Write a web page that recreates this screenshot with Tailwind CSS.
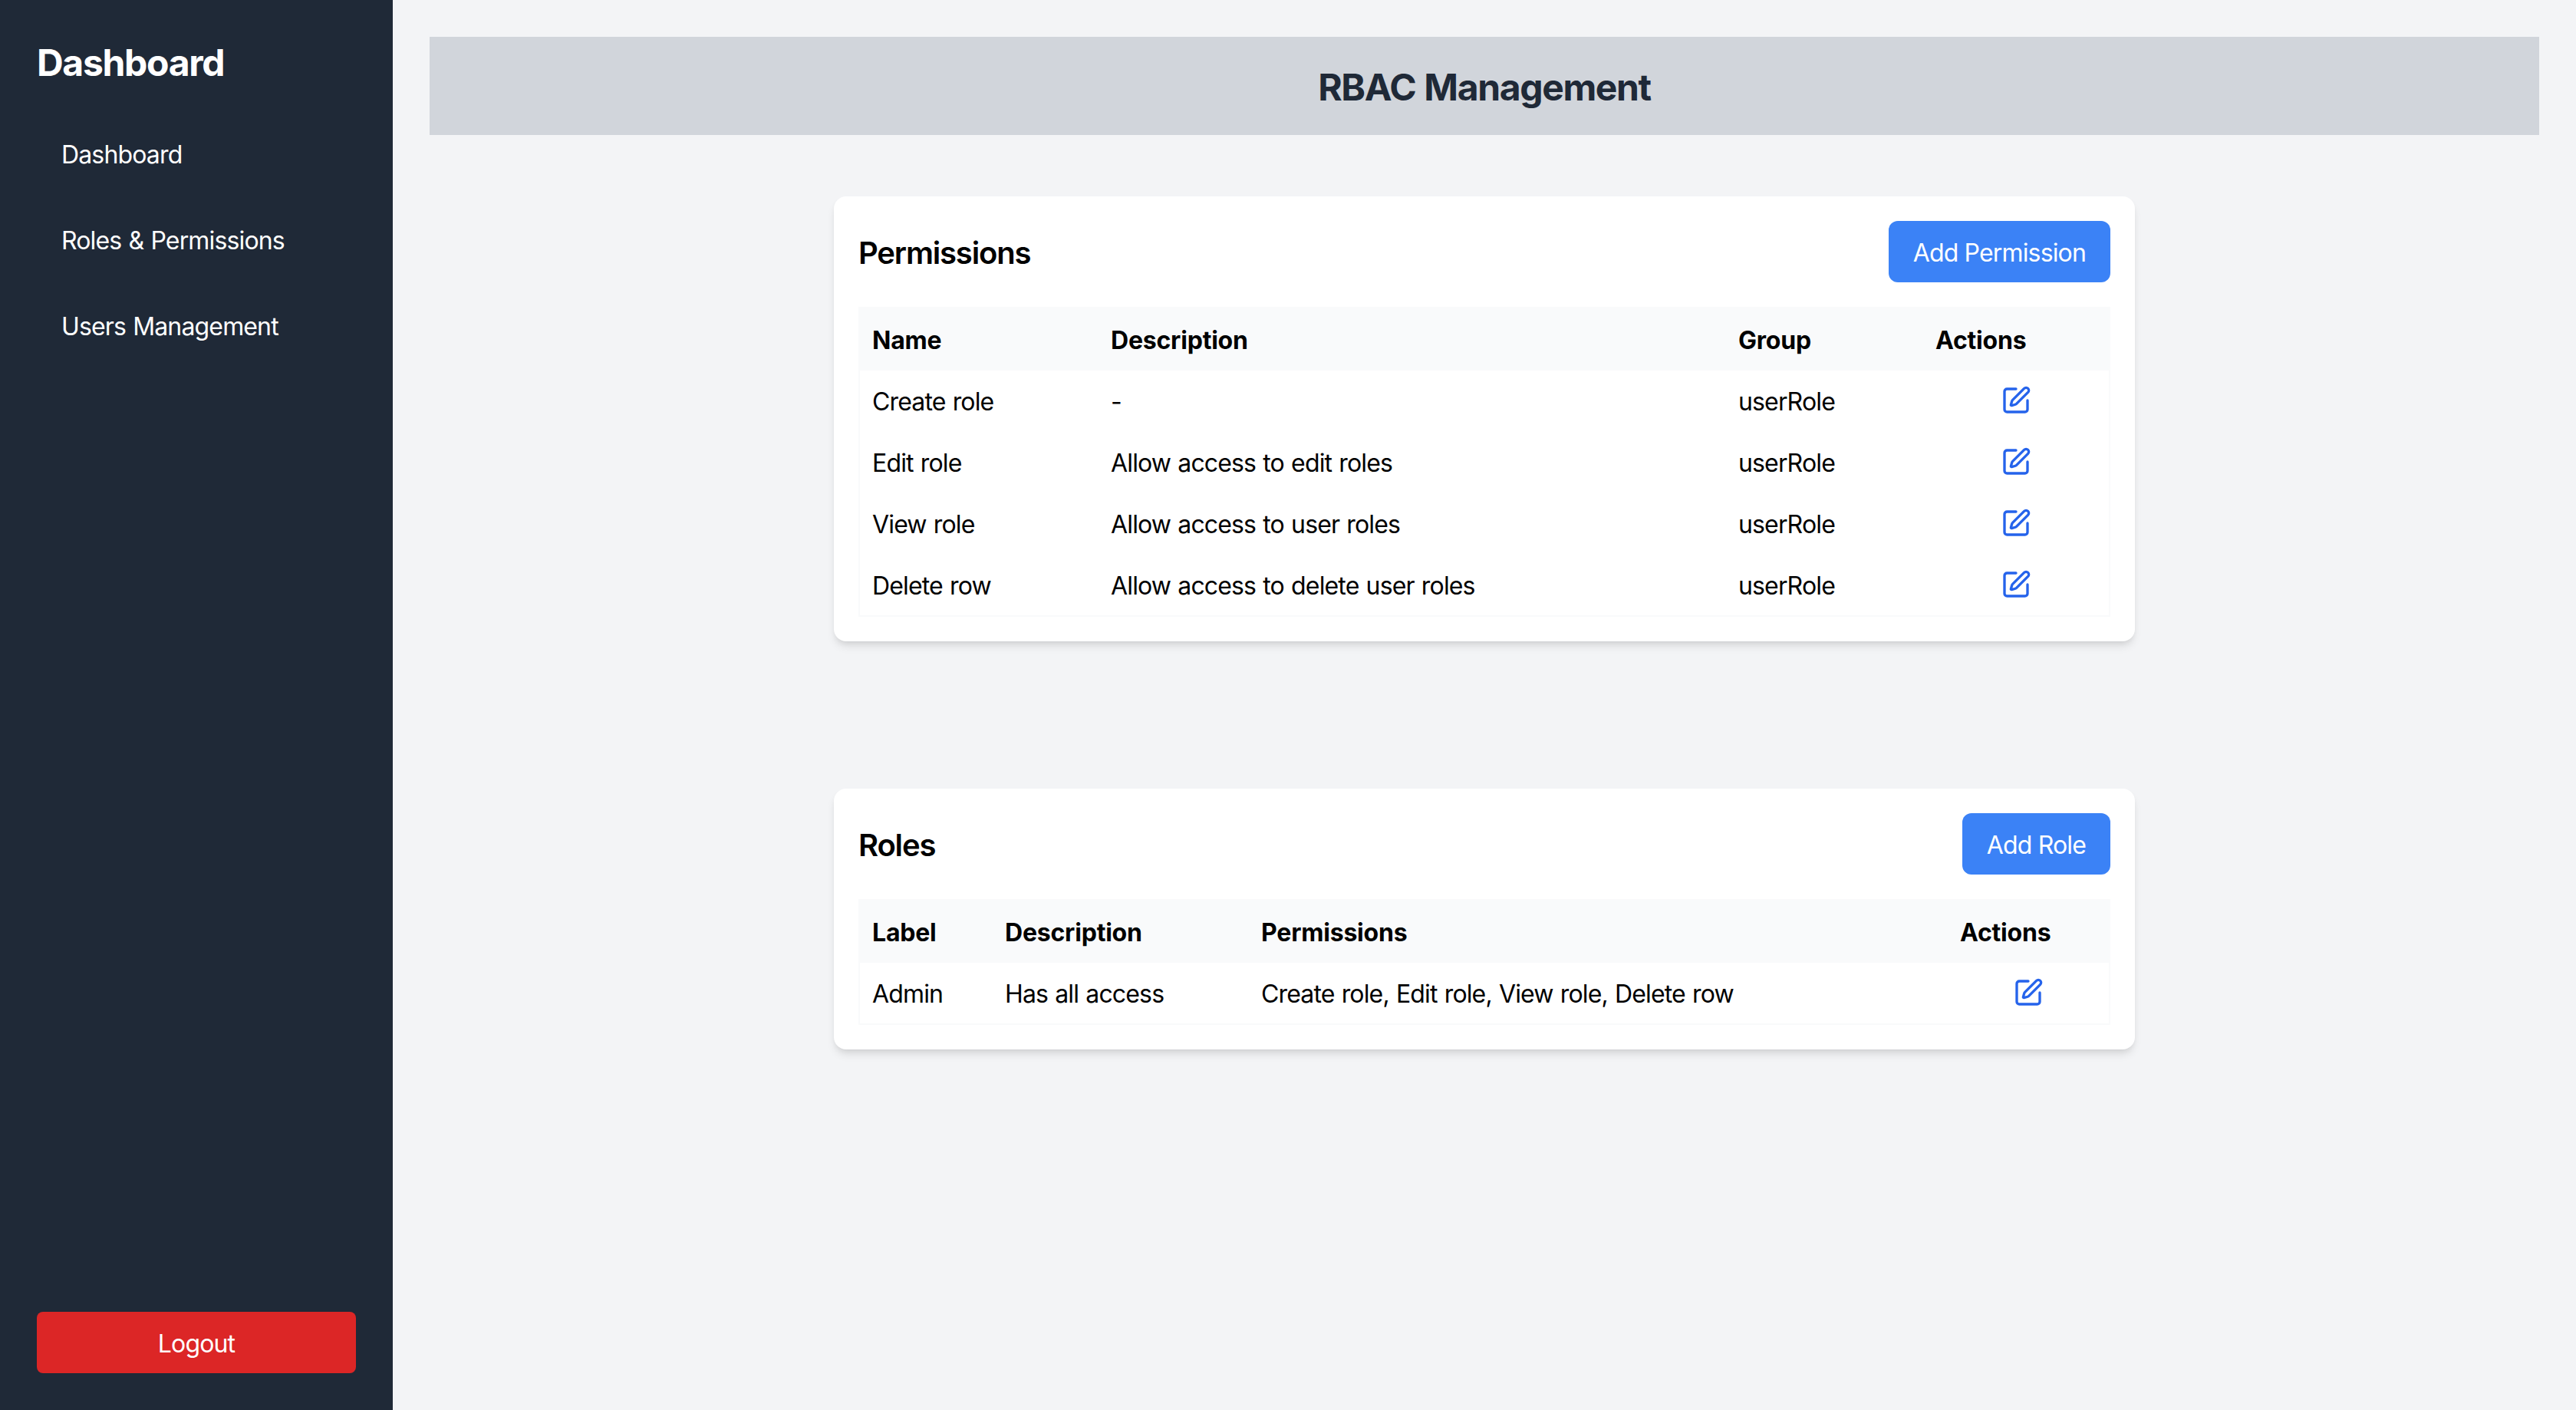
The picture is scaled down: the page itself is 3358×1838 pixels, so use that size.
<!DOCTYPE html>
<html lang="en">

<head>
    <meta charset="UTF-8">
    <meta name="viewport" content="width=device-width, initial-scale=1.0">
    <script src="https://cdn.jsdelivr.net/npm/@tailwindcss/browser@4"></script>
    <title>RBAC Management</title>
</head>

<body class="font-['Inter',sans-serif] text-[32px] leading-[48px] tracking-[-0.85px] [word-spacing:1px] text-black bg-[#f3f4f6]">
<div class="flex h-[1838px]">
    <!-- sidebar -->
    <aside class="w-[512px] shrink-0 bg-[#1f2937] text-white p-[48px] flex flex-col justify-between">
        <div>
            <h2 class="text-[48px] leading-[64px] font-bold tracking-[-1.3px] pt-[2px] mb-[46px]">Dashboard</h2>
            <ul class="flex flex-col gap-[32px]">
                <li class="px-[32px] pt-[18px] pb-[14px]">Dashboard</li>
                <li class="px-[32px] pt-[18px] pb-[14px]">Roles &amp; Permissions</li>
                <li class="px-[32px] pt-[18px] pb-[14px]">Users Management</li>
            </ul>
        </div>
        <button class="w-full h-[80px] pt-[4px] bg-[#dc2626] text-white rounded-[8px]">Logout</button>
    </aside>

    <main class="flex-1 p-[48px]">
        <h1 class="bg-[#d1d5db] text-[#1f2937] text-[48px] leading-[64px] font-bold tracking-[-1.37px] text-center pt-[34px] pb-[30px]">RBAC Management</h1>

        <!-- permissions -->
        <section class="w-[1696px] mx-auto mt-[80px] bg-white rounded-[16px] shadow-[0_8px_12px_-2px_rgb(0_0_0_/_0.1),0_4px_8px_-4px_rgb(0_0_0_/_0.1)] p-[32px]">
            <div class="flex items-center justify-between mb-[32px]">
                <h3 class="text-[40px] leading-[56px] font-semibold tracking-[-1.17px] pt-[4px]">Permissions</h3>
                <button class="h-[80px] px-[32px] pt-[4px] bg-[#3b82f6] text-white rounded-[12px]">Add Permission</button>
            </div>
            <table class="w-full table-fixed border-collapse border-2 border-[#f9fafb]">
                <thead class="bg-[#f9fafb]">
                    <tr class="h-[82px] text-left">
                        <th class="w-[312px] px-[16px] pt-[3px] font-bold tracking-[-0.2px]">Name</th>
                        <th class="w-[818px] px-[16px] pt-[3px] font-bold tracking-[-0.2px]">Description</th>
                        <th class="w-[257px] px-[16px] pt-[3px] font-bold tracking-[-0.2px]">Group</th>
                        <th class="px-[16px] pt-[3px] font-bold tracking-[-0.2px]">Actions</th>
                    </tr>
                </thead>
                <tbody>
                    <tr class="h-[80px]">
                        <td class="px-[16px] pt-[2px]">Create role</td>
                        <td class="px-[16px] pt-[2px]">-</td>
                        <td class="px-[16px] pt-[2px]">userRole</td>
                        <td class="px-[16px]"><svg class="w-[40px] h-[40px] mx-auto -translate-y-px text-[#2563eb]" viewBox="0 0 24 24" fill="none" stroke="currentColor" stroke-width="2" stroke-linecap="round" stroke-linejoin="round"><path d="M12 3H5a2 2 0 0 0-2 2v14a2 2 0 0 0 2 2h14a2 2 0 0 0 2-2v-7"/><path d="M18.375 2.625a1 1 0 0 1 3 3l-9.013 9.014a2 2 0 0 1-.853.505l-2.873.84a.5.5 0 0 1-.62-.62l.84-2.873a2 2 0 0 1 .506-.852z"/></svg></td>
                    </tr>
                    <tr class="h-[80px]">
                        <td class="px-[16px] pt-[2px]">Edit role</td>
                        <td class="px-[16px] pt-[2px]">Allow access to edit roles</td>
                        <td class="px-[16px] pt-[2px]">userRole</td>
                        <td class="px-[16px]"><svg class="w-[40px] h-[40px] mx-auto -translate-y-px text-[#2563eb]" viewBox="0 0 24 24" fill="none" stroke="currentColor" stroke-width="2" stroke-linecap="round" stroke-linejoin="round"><path d="M12 3H5a2 2 0 0 0-2 2v14a2 2 0 0 0 2 2h14a2 2 0 0 0 2-2v-7"/><path d="M18.375 2.625a1 1 0 0 1 3 3l-9.013 9.014a2 2 0 0 1-.853.505l-2.873.84a.5.5 0 0 1-.62-.62l.84-2.873a2 2 0 0 1 .506-.852z"/></svg></td>
                    </tr>
                    <tr class="h-[80px]">
                        <td class="px-[16px] pt-[2px]">View role</td>
                        <td class="px-[16px] pt-[2px]">Allow access to user roles</td>
                        <td class="px-[16px] pt-[2px]">userRole</td>
                        <td class="px-[16px]"><svg class="w-[40px] h-[40px] mx-auto -translate-y-px text-[#2563eb]" viewBox="0 0 24 24" fill="none" stroke="currentColor" stroke-width="2" stroke-linecap="round" stroke-linejoin="round"><path d="M12 3H5a2 2 0 0 0-2 2v14a2 2 0 0 0 2 2h14a2 2 0 0 0 2-2v-7"/><path d="M18.375 2.625a1 1 0 0 1 3 3l-9.013 9.014a2 2 0 0 1-.853.505l-2.873.84a.5.5 0 0 1-.62-.62l.84-2.873a2 2 0 0 1 .506-.852z"/></svg></td>
                    </tr>
                    <tr class="h-[80px]">
                        <td class="px-[16px] pt-[2px]">Delete row</td>
                        <td class="px-[16px] pt-[2px]">Allow access to delete user roles</td>
                        <td class="px-[16px] pt-[2px]">userRole</td>
                        <td class="px-[16px]"><svg class="w-[40px] h-[40px] mx-auto -translate-y-px text-[#2563eb]" viewBox="0 0 24 24" fill="none" stroke="currentColor" stroke-width="2" stroke-linecap="round" stroke-linejoin="round"><path d="M12 3H5a2 2 0 0 0-2 2v14a2 2 0 0 0 2 2h14a2 2 0 0 0 2-2v-7"/><path d="M18.375 2.625a1 1 0 0 1 3 3l-9.013 9.014a2 2 0 0 1-.853.505l-2.873.84a.5.5 0 0 1-.62-.62l.84-2.873a2 2 0 0 1 .506-.852z"/></svg></td>
                    </tr>
                </tbody>
            </table>
        </section>

        <!-- roles -->
        <section class="w-[1696px] mx-auto mt-[192px] bg-white rounded-[16px] shadow-[0_8px_12px_-2px_rgb(0_0_0_/_0.1),0_4px_8px_-4px_rgb(0_0_0_/_0.1)] p-[32px]">
            <div class="flex items-center justify-between mb-[32px]">
                <h3 class="text-[40px] leading-[56px] font-semibold tracking-[-1.17px] pt-[4px]">Roles</h3>
                <button class="h-[80px] px-[32px] pt-[4px] bg-[#3b82f6] text-white rounded-[12px]">Add Role</button>
            </div>
            <table class="w-full table-fixed border-collapse border-2 border-[#f9fafb]">
                <thead class="bg-[#f9fafb]">
                    <tr class="h-[82px] text-left">
                        <th class="w-[174px] px-[16px] pt-[3px] font-bold tracking-[-0.2px]">Label</th>
                        <th class="w-[334px] px-[16px] pt-[3px] font-bold tracking-[-0.2px]">Description</th>
                        <th class="w-[911px] px-[16px] pt-[3px] font-bold tracking-[-0.2px]">Permissions</th>
                        <th class="px-[16px] pt-[3px] font-bold tracking-[-0.2px]">Actions</th>
                    </tr>
                </thead>
                <tbody>
                    <tr class="h-[80px]">
                        <td class="px-[16px] pt-[2px]">Admin</td>
                        <td class="px-[16px] pt-[2px]">Has all access</td>
                        <td class="px-[16px] pt-[2px]">Create role, Edit role, View role, Delete row</td>
                        <td class="px-[16px]"><svg class="w-[40px] h-[40px] mx-auto -translate-y-px text-[#2563eb]" viewBox="0 0 24 24" fill="none" stroke="currentColor" stroke-width="2" stroke-linecap="round" stroke-linejoin="round"><path d="M12 3H5a2 2 0 0 0-2 2v14a2 2 0 0 0 2 2h14a2 2 0 0 0 2-2v-7"/><path d="M18.375 2.625a1 1 0 0 1 3 3l-9.013 9.014a2 2 0 0 1-.853.505l-2.873.84a.5.5 0 0 1-.62-.62l.84-2.873a2 2 0 0 1 .506-.852z"/></svg></td>
                    </tr>
                </tbody>
            </table>
        </section>
    </main>
</div>
</body>

</html>
